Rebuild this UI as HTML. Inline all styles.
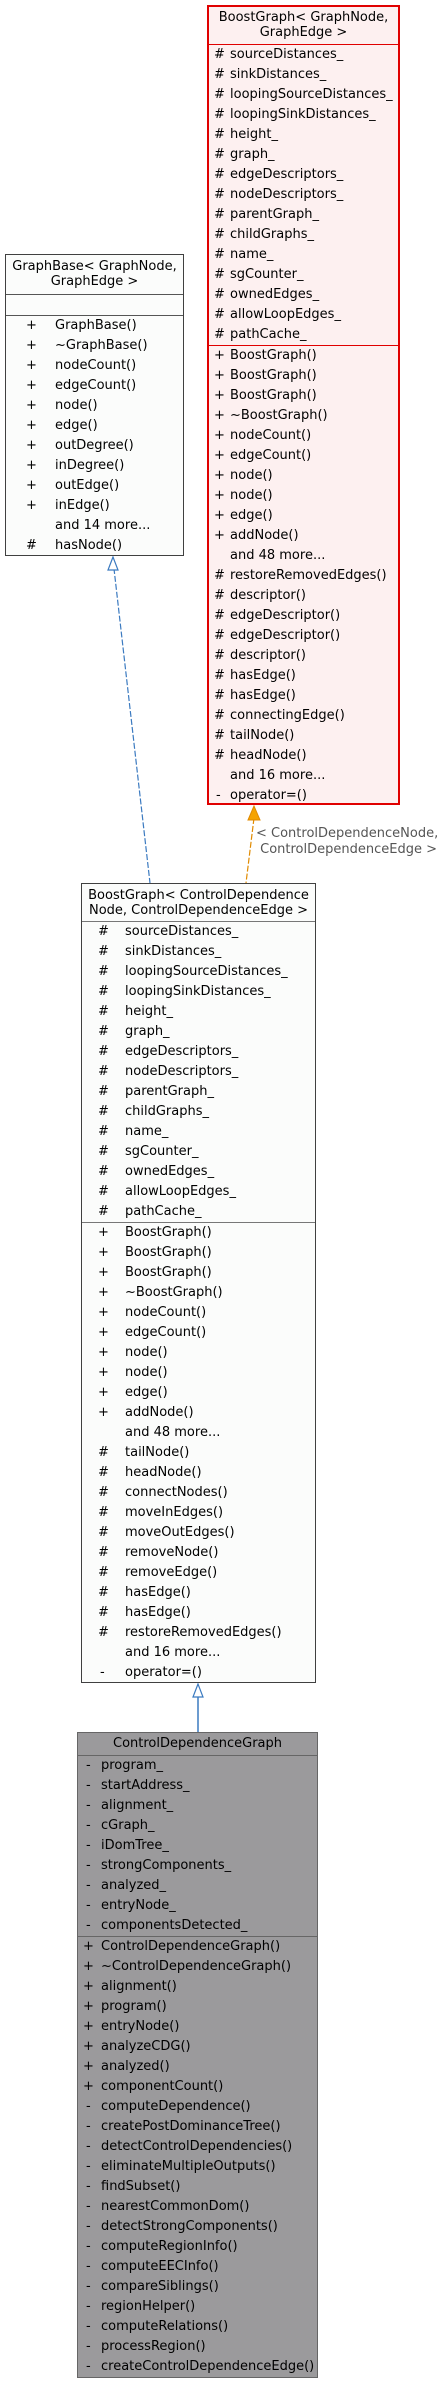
<!DOCTYPE html>
<html><head><meta charset="utf-8"><style>
body{margin:0;width:442px;height:2383px;background:#fff;position:relative;font-family:"DejaVu Sans","Liberation Sans",sans-serif;font-size:13px;color:#000;overflow:hidden}
.box{position:absolute;box-sizing:border-box}
.hd{text-align:center;line-height:15px;box-sizing:border-box}
.sec{border-top:1px solid}
.r{height:20px;line-height:20px;position:relative;white-space:nowrap}
.r b{font-weight:normal;position:absolute}
.r span{position:absolute}
.lbl{position:absolute;font-size:13px;color:#555;line-height:16px;white-space:nowrap}
</style></head><body>
<svg width="442" height="2383" style="position:absolute;left:0;top:0">
<path d="M113,560 L150,883" stroke="#3b7ac0" stroke-width="1.2" stroke-dasharray="6,2" fill="none"/>
<path d="M113,557 L108,570 L118,570 Z" fill="#fff" stroke="#3b7ac0" stroke-width="1.2"/>
<path d="M254,818 L246,883" stroke="#e08a00" stroke-width="1.2" stroke-dasharray="6,2" fill="none"/>
<path d="M254,806 L248,820 L260,820 Z" fill="#f5a300" stroke="#e08a00" stroke-width="1"/>
<path d="M198,1697 L198,1732" stroke="#3b7ac0" stroke-width="1.5" fill="none"/>
<path d="M198,1684 L193,1697 L203,1697 Z" fill="#fff" stroke="#3b7ac0" stroke-width="1.2"/>
</svg>

<div class="lbl" style="left:256px;top:826px">&lt; ControlDependenceNode,<br>&nbsp;ControlDependenceEdge &gt;</div>

<!-- top box -->
<div class="box" style="left:207px;top:5px;width:193px;height:800px;background:#fdf0f0;border:2px solid #e00000">
<div class="hd" style="height:37px;padding-top:3px">BoostGraph&lt; GraphNode,<br>GraphEdge &gt;</div>
<div class="sec" style="border-color:#e00000">
<div class="r"><b style="left:5px">#</b><span style="left:21px">sourceDistances_</span></div>
<div class="r"><b style="left:5px">#</b><span style="left:21px">sinkDistances_</span></div>
<div class="r"><b style="left:5px">#</b><span style="left:21px">loopingSourceDistances_</span></div>
<div class="r"><b style="left:5px">#</b><span style="left:21px">loopingSinkDistances_</span></div>
<div class="r"><b style="left:5px">#</b><span style="left:21px">height_</span></div>
<div class="r"><b style="left:5px">#</b><span style="left:21px">graph_</span></div>
<div class="r"><b style="left:5px">#</b><span style="left:21px">edgeDescriptors_</span></div>
<div class="r"><b style="left:5px">#</b><span style="left:21px">nodeDescriptors_</span></div>
<div class="r"><b style="left:5px">#</b><span style="left:21px">parentGraph_</span></div>
<div class="r"><b style="left:5px">#</b><span style="left:21px">childGraphs_</span></div>
<div class="r"><b style="left:5px">#</b><span style="left:21px">name_</span></div>
<div class="r"><b style="left:5px">#</b><span style="left:21px">sgCounter_</span></div>
<div class="r"><b style="left:5px">#</b><span style="left:21px">ownedEdges_</span></div>
<div class="r"><b style="left:5px">#</b><span style="left:21px">allowLoopEdges_</span></div>
<div class="r"><b style="left:5px">#</b><span style="left:21px">pathCache_</span></div>
</div>
<div class="sec" style="border-color:#e00000">
<div class="r"><b style="left:5px">+</b><span style="left:21px">BoostGraph()</span></div>
<div class="r"><b style="left:5px">+</b><span style="left:21px">BoostGraph()</span></div>
<div class="r"><b style="left:5px">+</b><span style="left:21px">BoostGraph()</span></div>
<div class="r"><b style="left:5px">+</b><span style="left:21px">~BoostGraph()</span></div>
<div class="r"><b style="left:5px">+</b><span style="left:21px">nodeCount()</span></div>
<div class="r"><b style="left:5px">+</b><span style="left:21px">edgeCount()</span></div>
<div class="r"><b style="left:5px">+</b><span style="left:21px">node()</span></div>
<div class="r"><b style="left:5px">+</b><span style="left:21px">node()</span></div>
<div class="r"><b style="left:5px">+</b><span style="left:21px">edge()</span></div>
<div class="r"><b style="left:5px">+</b><span style="left:21px">addNode()</span></div>
<div class="r"><span style="left:21px">and 48 more...</span></div>
<div class="r"><b style="left:5px">#</b><span style="left:21px">restoreRemovedEdges()</span></div>
<div class="r"><b style="left:5px">#</b><span style="left:21px">descriptor()</span></div>
<div class="r"><b style="left:5px">#</b><span style="left:21px">edgeDescriptor()</span></div>
<div class="r"><b style="left:5px">#</b><span style="left:21px">edgeDescriptor()</span></div>
<div class="r"><b style="left:5px">#</b><span style="left:21px">descriptor()</span></div>
<div class="r"><b style="left:5px">#</b><span style="left:21px">hasEdge()</span></div>
<div class="r"><b style="left:5px">#</b><span style="left:21px">hasEdge()</span></div>
<div class="r"><b style="left:5px">#</b><span style="left:21px">connectingEdge()</span></div>
<div class="r"><b style="left:5px">#</b><span style="left:21px">tailNode()</span></div>
<div class="r"><b style="left:5px">#</b><span style="left:21px">headNode()</span></div>
<div class="r"><span style="left:21px">and 16 more...</span></div>
<div class="r"><b style="left:7px">-</b><span style="left:21px">operator=()</span></div>
</div>
</div>

<!-- GraphBase -->
<div class="box" style="left:5px;top:254px;width:179px;height:302px;background:#fbfcfb;border:1px solid #404040">
<div class="hd" style="height:39px;padding-top:4px">GraphBase&lt; GraphNode,<br>GraphEdge &gt;</div>
<div class="sec" style="border-color:#555;height:20px"></div>
<div class="sec" style="border-color:#555">
<div class="r"><b style="left:20px">+</b><span style="left:49px">GraphBase()</span></div>
<div class="r"><b style="left:20px">+</b><span style="left:49px">~GraphBase()</span></div>
<div class="r"><b style="left:20px">+</b><span style="left:49px">nodeCount()</span></div>
<div class="r"><b style="left:20px">+</b><span style="left:49px">edgeCount()</span></div>
<div class="r"><b style="left:20px">+</b><span style="left:49px">node()</span></div>
<div class="r"><b style="left:20px">+</b><span style="left:49px">edge()</span></div>
<div class="r"><b style="left:20px">+</b><span style="left:49px">outDegree()</span></div>
<div class="r"><b style="left:20px">+</b><span style="left:49px">inDegree()</span></div>
<div class="r"><b style="left:20px">+</b><span style="left:49px">outEdge()</span></div>
<div class="r"><b style="left:20px">+</b><span style="left:49px">inEdge()</span></div>
<div class="r"><span style="left:49px">and 14 more...</span></div>
<div class="r"><b style="left:20px">#</b><span style="left:49px">hasNode()</span></div>
</div>
</div>

<!-- middle -->
<div class="box" style="left:81px;top:883px;width:235px;height:800px;background:#fbfcfb;border:1px solid #404040">
<div class="hd" style="height:37px;padding-top:4px">BoostGraph&lt; ControlDependence<br>Node, ControlDependenceEdge &gt;</div>
<div class="sec" style="border-color:#777">
<div class="r"><b style="left:16px">#</b><span style="left:43px">sourceDistances_</span></div>
<div class="r"><b style="left:16px">#</b><span style="left:43px">sinkDistances_</span></div>
<div class="r"><b style="left:16px">#</b><span style="left:43px">loopingSourceDistances_</span></div>
<div class="r"><b style="left:16px">#</b><span style="left:43px">loopingSinkDistances_</span></div>
<div class="r"><b style="left:16px">#</b><span style="left:43px">height_</span></div>
<div class="r"><b style="left:16px">#</b><span style="left:43px">graph_</span></div>
<div class="r"><b style="left:16px">#</b><span style="left:43px">edgeDescriptors_</span></div>
<div class="r"><b style="left:16px">#</b><span style="left:43px">nodeDescriptors_</span></div>
<div class="r"><b style="left:16px">#</b><span style="left:43px">parentGraph_</span></div>
<div class="r"><b style="left:16px">#</b><span style="left:43px">childGraphs_</span></div>
<div class="r"><b style="left:16px">#</b><span style="left:43px">name_</span></div>
<div class="r"><b style="left:16px">#</b><span style="left:43px">sgCounter_</span></div>
<div class="r"><b style="left:16px">#</b><span style="left:43px">ownedEdges_</span></div>
<div class="r"><b style="left:16px">#</b><span style="left:43px">allowLoopEdges_</span></div>
<div class="r"><b style="left:16px">#</b><span style="left:43px">pathCache_</span></div>
</div>
<div class="sec" style="border-color:#777">
<div class="r"><b style="left:16px">+</b><span style="left:43px">BoostGraph()</span></div>
<div class="r"><b style="left:16px">+</b><span style="left:43px">BoostGraph()</span></div>
<div class="r"><b style="left:16px">+</b><span style="left:43px">BoostGraph()</span></div>
<div class="r"><b style="left:16px">+</b><span style="left:43px">~BoostGraph()</span></div>
<div class="r"><b style="left:16px">+</b><span style="left:43px">nodeCount()</span></div>
<div class="r"><b style="left:16px">+</b><span style="left:43px">edgeCount()</span></div>
<div class="r"><b style="left:16px">+</b><span style="left:43px">node()</span></div>
<div class="r"><b style="left:16px">+</b><span style="left:43px">node()</span></div>
<div class="r"><b style="left:16px">+</b><span style="left:43px">edge()</span></div>
<div class="r"><b style="left:16px">+</b><span style="left:43px">addNode()</span></div>
<div class="r"><span style="left:43px">and 48 more...</span></div>
<div class="r"><b style="left:16px">#</b><span style="left:43px">tailNode()</span></div>
<div class="r"><b style="left:16px">#</b><span style="left:43px">headNode()</span></div>
<div class="r"><b style="left:16px">#</b><span style="left:43px">connectNodes()</span></div>
<div class="r"><b style="left:16px">#</b><span style="left:43px">moveInEdges()</span></div>
<div class="r"><b style="left:16px">#</b><span style="left:43px">moveOutEdges()</span></div>
<div class="r"><b style="left:16px">#</b><span style="left:43px">removeNode()</span></div>
<div class="r"><b style="left:16px">#</b><span style="left:43px">removeEdge()</span></div>
<div class="r"><b style="left:16px">#</b><span style="left:43px">hasEdge()</span></div>
<div class="r"><b style="left:16px">#</b><span style="left:43px">hasEdge()</span></div>
<div class="r"><b style="left:16px">#</b><span style="left:43px">restoreRemovedEdges()</span></div>
<div class="r"><span style="left:43px">and 16 more...</span></div>
<div class="r"><b style="left:18px">-</b><span style="left:43px">operator=()</span></div>
</div>
</div>

<!-- bottom -->
<div class="box" style="left:77px;top:1732px;width:241px;height:646px;background:#9b9a9c;border:1px solid #666">
<div class="hd" style="height:22px;line-height:22px">ControlDependenceGraph</div>
<div class="sec" style="border-color:#666">
<div class="r"><b style="left:8px">-</b><span style="left:23px">program_</span></div>
<div class="r"><b style="left:8px">-</b><span style="left:23px">startAddress_</span></div>
<div class="r"><b style="left:8px">-</b><span style="left:23px">alignment_</span></div>
<div class="r"><b style="left:8px">-</b><span style="left:23px">cGraph_</span></div>
<div class="r"><b style="left:8px">-</b><span style="left:23px">iDomTree_</span></div>
<div class="r"><b style="left:8px">-</b><span style="left:23px">strongComponents_</span></div>
<div class="r"><b style="left:8px">-</b><span style="left:23px">analyzed_</span></div>
<div class="r"><b style="left:8px">-</b><span style="left:23px">entryNode_</span></div>
<div class="r"><b style="left:8px">-</b><span style="left:23px">componentsDetected_</span></div>
</div>
<div class="sec" style="border-color:#666">
<div class="r"><b style="left:5px">+</b><span style="left:23px">ControlDependenceGraph()</span></div>
<div class="r"><b style="left:5px">+</b><span style="left:23px">~ControlDependenceGraph()</span></div>
<div class="r"><b style="left:5px">+</b><span style="left:23px">alignment()</span></div>
<div class="r"><b style="left:5px">+</b><span style="left:23px">program()</span></div>
<div class="r"><b style="left:5px">+</b><span style="left:23px">entryNode()</span></div>
<div class="r"><b style="left:5px">+</b><span style="left:23px">analyzeCDG()</span></div>
<div class="r"><b style="left:5px">+</b><span style="left:23px">analyzed()</span></div>
<div class="r"><b style="left:5px">+</b><span style="left:23px">componentCount()</span></div>
<div class="r"><b style="left:8px">-</b><span style="left:23px">computeDependence()</span></div>
<div class="r"><b style="left:8px">-</b><span style="left:23px">createPostDominanceTree()</span></div>
<div class="r"><b style="left:8px">-</b><span style="left:23px">detectControlDependencies()</span></div>
<div class="r"><b style="left:8px">-</b><span style="left:23px">eliminateMultipleOutputs()</span></div>
<div class="r"><b style="left:8px">-</b><span style="left:23px">findSubset()</span></div>
<div class="r"><b style="left:8px">-</b><span style="left:23px">nearestCommonDom()</span></div>
<div class="r"><b style="left:8px">-</b><span style="left:23px">detectStrongComponents()</span></div>
<div class="r"><b style="left:8px">-</b><span style="left:23px">computeRegionInfo()</span></div>
<div class="r"><b style="left:8px">-</b><span style="left:23px">computeEECInfo()</span></div>
<div class="r"><b style="left:8px">-</b><span style="left:23px">compareSiblings()</span></div>
<div class="r"><b style="left:8px">-</b><span style="left:23px">regionHelper()</span></div>
<div class="r"><b style="left:8px">-</b><span style="left:23px">computeRelations()</span></div>
<div class="r"><b style="left:8px">-</b><span style="left:23px">processRegion()</span></div>
<div class="r"><b style="left:8px">-</b><span style="left:23px">createControlDependenceEdge()</span></div>
</div>
</div>
</body></html>
